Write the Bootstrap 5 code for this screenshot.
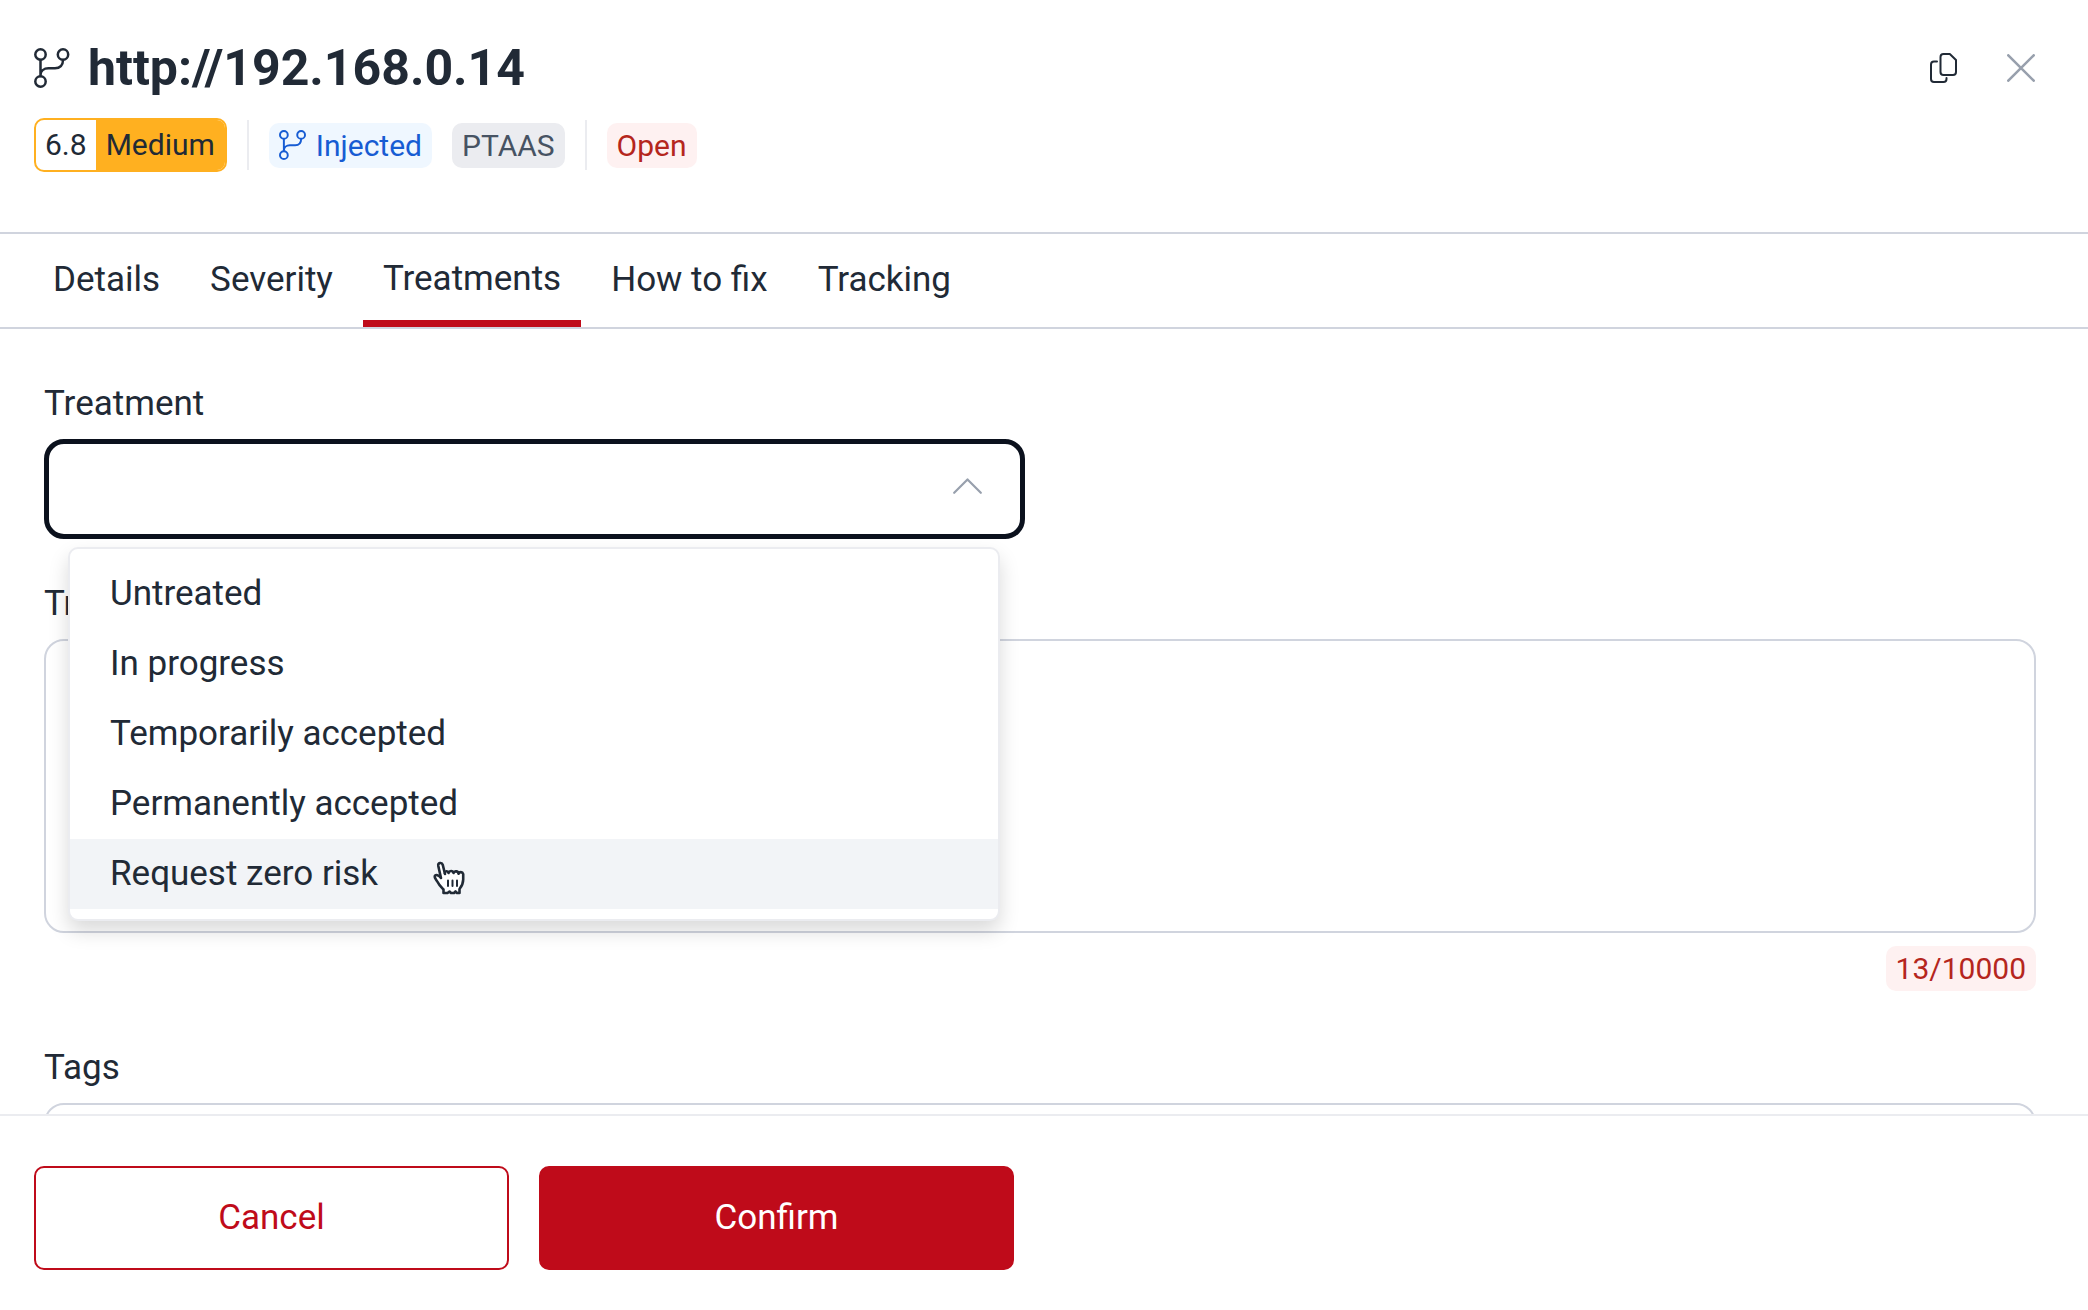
<!DOCTYPE html>
<html lang="en">
<head>
<meta charset="utf-8">
<meta name="viewport" content="width=device-width, initial-scale=1">
<title>http://192.168.0.14</title>
<link rel="stylesheet" href="https://cdn.jsdelivr.net/npm/bootstrap@5.3.0/dist/css/bootstrap.min.css">
<style>
  :root { --ink: #212a36; --brand: #bf0b1a; --line: #d0d4de; --soft: #ebecf0; }
  body { font-family: Roboto, "Liberation Sans", sans-serif; font-size: 35px; line-height: 50px; color: var(--ink); }
  svg { display: block; fill: none; stroke: currentColor; stroke-linecap: round; stroke-linejoin: round; }
  .panel-head { height: 232px; padding: 38px 53px 0 34px; }
  .panel-title { font-size: 50px; line-height: 60px; gap: 18px; }
  .head-actions { gap: 50px; }
  .icon-btn { color: var(--ink); border: 0; }
  .icon-btn.muted { color: #98a0ad; }
  .chips { margin-top: 20px; gap: 20px; font-size: 30px; line-height: 45px; }
  .score { border: 2px solid #ffb020; border-radius: 10px; line-height: 50px; overflow: hidden; }
  .score-num { padding: 0 9px; }
  .score-name { padding: 0 10px; background: #ffb020; }
  .chip { border-radius: 10px; padding: 0 10px; line-height: 45px; font-size: 30px; gap: 10px; }
  .chip-blue { background: #eff7ff; color: #175cd3; }
  .chip-grey { background: #ebecf0; color: #475363; }
  .chip-red { background: #fef1f1; color: #b5261d; }
  .rule { width: 2px; height: 50px; background: var(--soft); }
  .tabs { border-top: 2px solid var(--line); border-bottom: 2px solid var(--line); padding-left: 33px; gap: 10px; height: 97px; }
  .tabs .nav-link { color: var(--ink); padding: 21px 20px 0; height: 93px; }
  .tabs .nav-link.active { padding-top: 20px; border-bottom: 7px solid var(--brand); }
  .panel-body { padding: 50px 52px 0 44px; min-height: 0; }
  .panel-body .form-label { margin-bottom: 10px; }
  .half { gap: 30px; }
  .box { border: 2px solid var(--line); border-radius: 20px; background: #fff; font-size: 35px; resize: none; box-shadow: none; }
  .box-select { height: 100px; border: 5px solid #0b111d; background-image: none; }
  .box-select:focus { border-color: #0b111d; box-shadow: none; }
  .box-note { height: 294px; }
  .chevron { right: 43px; top: 39px; color: #98a0ad; pointer-events: none; }
  .options { top: 108px; left: 24px; right: 25px; padding: 10px 0; margin: 0; border: 2px solid var(--soft); border-radius: 10px; font-size: 35px; color: var(--ink); box-shadow: 0 10px 20px rgba(0, 0, 0, .15); }
  .options .dropdown-item { color: var(--ink); padding: 10px 40px; }
  .options .dropdown-item.hovered { background: #f2f4f7; }
  .pointer { left: 363px; top: 22px; }
  .note-field { margin-top: 40px; }
  .tags-field { margin-top: 52px; }
  .counter { margin-top: 13px; }
  .panel-foot { border-top: 2px solid var(--soft); padding: 50px 64px 40px 34px; }
  .action { height: 104px; border-radius: 10px; font-size: 35px; border: 2px solid var(--brand); }
  .action-plain { color: var(--brand); background: #fff; }
  .action-main { color: #fff; background: var(--brand); }
</style>
<script src="https://cdn.jsdelivr.net/npm/bootstrap@5.3.0/dist/js/bootstrap.bundle.min.js"></script>
</head>
<body class="vh-100 d-flex flex-column overflow-hidden bg-white">

<header class="panel-head flex-shrink-0">
  <div class="d-flex justify-content-between align-items-center">
    <h1 class="panel-title d-flex align-items-center fw-bold mb-0">
      <svg width="36" height="40" viewBox="0 0 36 40" stroke-width="2.5" aria-hidden="true"><circle cx="6.5" cy="6.5" r="5.2"/><circle cx="29" cy="6.5" r="5.2"/><circle cx="6.5" cy="33.5" r="5.2"/><path d="M6.5 12v16M29 12c0 5-3 8.300-8 8.300H14.500c-4.500 0-8 2.700-8 7"/></svg>
      <span>http://192.168.0.14</span>
    </h1>
    <div class="head-actions d-flex align-items-center">
      <button type="button" class="icon-btn bg-transparent p-0" aria-label="Copy">
        <svg width="27" height="30" viewBox="0 0 27 30" stroke-width="2"><path d="M13.500 1h6.300L26 7v12a3 3 0 0 1-3 3h-9.500a3 3 0 0 1-3-3V4a3 3 0 0 1 3-3z"/><path d="M7 8.500H4a3 3 0 0 0-3 3V26a3 3 0 0 0 3 3h9.500a3 3 0 0 0 3-3v-1"/></svg>
      </button>
      <button type="button" class="icon-btn muted bg-transparent p-0" aria-label="Close">
        <svg width="28" height="28" viewBox="0 0 28 28" stroke-width="2.600"><path d="M1.300 1.300l25.400 25.400M26.700 1.300L1.300 26.700"/></svg>
      </button>
    </div>
  </div>
  <div class="chips d-flex align-items-center">
    <div class="score d-flex"><span class="score-num">6.8</span><span class="score-name">Medium</span></div>
    <div class="rule"></div>
    <span class="chip chip-blue d-flex align-items-center">
      <svg width="27" height="30" viewBox="0 0 36 40" stroke-width="2.600" aria-hidden="true"><circle cx="6.500" cy="6.500" r="5.200"/><circle cx="29.500" cy="6.500" r="5.200"/><circle cx="6.500" cy="33.500" r="5.200"/><path d="M6.500 12v16M29.500 12c0 5-3 8.300-8 8.300H14.500c-4.500 0-8 2.700-8 7"/></svg>
      Injected</span>
    <span class="chip chip-grey">PTAAS</span>
    <div class="rule"></div>
    <span class="chip chip-red">Open</span>
  </div>
</header>

<nav class="tabs nav flex-nowrap flex-shrink-0">
  <a class="nav-link" href="#">Details</a>
  <a class="nav-link" href="#">Severity</a>
  <a class="nav-link active" href="#" aria-current="page">Treatments</a>
  <a class="nav-link" href="#">How to fix</a>
  <a class="nav-link" href="#">Tracking</a>
</nav>

<main class="panel-body flex-fill overflow-hidden">
  <div class="half d-flex">
    <div class="flex-fill w-50">
      <label class="form-label d-block" for="treatment">Treatment</label>
      <div class="position-relative">
        <select class="form-select box box-select" id="treatment"><option value=""></option></select>
        <svg class="chevron position-absolute" width="29" height="16" viewBox="0 0 29 16" stroke-width="2.200"><path d="M1.200 14.800L14.500 1.400l13.300 13.400"/></svg>
        <ul class="options dropdown-menu show">
          <li><button type="button" class="dropdown-item">Untreated</button></li>
          <li><button type="button" class="dropdown-item">In progress</button></li>
          <li><button type="button" class="dropdown-item">Temporarily accepted</button></li>
          <li><button type="button" class="dropdown-item">Permanently accepted</button></li>
          <li class="position-relative">
            <button type="button" class="dropdown-item hovered">Request zero risk</button>
            <svg class="pointer position-absolute" width="32" height="34" viewBox="0 0 32 34" stroke="#1b2230" stroke-width="2.600"><path fill="#fff" d="M12 13L9.800 4C8.800.800 4.700 1.800 5.300 5L8 17C6 14 2.500 13 1.700 15.300c-.4 1.700 1.600 3.200 2.900 5.700 1.500 3.200 4 5.500 5.900 7.500V32h4l2-1.500 1.500 1.500h3l1.500-1.500L24 32h2.500v-4c2.500-3 3.700-6 3.700-9.500V13c-.7-2.500-4-2.300-4.700-.3-.3-2.700-4.200-3.200-5-.7-.7-2.700-4.200-2.500-5 0-.5-2-3-2.500-4 0"/><path d="M15 19.500v5.500M19.500 19.500v5.500M24 19.500v5.500" stroke-width="2"/></svg>
          </li>
        </ul>
      </div>
    </div>
    <div class="flex-fill w-50"></div>
  </div>

  <div class="note-field">
    <label class="form-label d-block" for="justification">Treatment justification</label>
    <textarea class="form-control box box-note" id="justification"></textarea>
    <div class="counter d-flex justify-content-end"><span class="chip chip-red">13/10000</span></div>
  </div>

  <div class="tags-field">
    <label class="form-label d-block" for="tags">Tags</label>
    <input class="form-control box" id="tags" type="text">
  </div>
</main>

<footer class="panel-foot flex-shrink-0">
  <div class="half d-flex">
    <div class="half d-flex w-50 flex-fill">
      <button type="button" class="action action-plain flex-fill w-50">Cancel</button>
      <button type="button" class="action action-main flex-fill w-50">Confirm</button>
    </div>
    <div class="w-50 flex-fill"></div>
  </div>
</footer>
</body>
</html>
